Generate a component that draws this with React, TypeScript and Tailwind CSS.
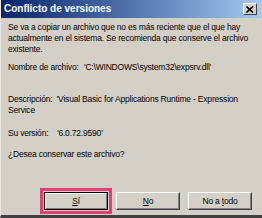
import React from 'react';

const font = { fontFamily: '"Liberation Sans", Arial, sans-serif' };

const ClassicButton = ({ label, accessKey, focused }: { label: string; accessKey: number; focused?: boolean }) => {
    const chars = label.split('');
    return (
        <div
            className={`h-[18px] w-[64px] bg-[#d4d0c8] flex items-center justify-center text-[8.5px] text-black border ${
                focused
                    ? 'border-black'
                    : 'border-t-white border-l-white border-b-[#404040] border-r-[#404040]'
            }`}
        >
            <div
                className={`w-full h-full flex items-center justify-center ${
                    focused
                        ? 'border border-t-white border-l-white border-b-[#808080] border-r-[#808080]'
                        : 'border border-transparent border-b-[#808080] border-r-[#808080]'
                }`}
            >
                <span>
                    {chars.map((c, i) => (
                        <span key={i} className={i === accessKey ? 'underline' : ''}>
                            {c}
                        </span>
                    ))}
                </span>
            </div>
        </div>
    );
};

export default function App() {
    return (
        <div
            className="w-[262px] h-[218px] bg-[#d4d0c8] flex flex-col border-l border-l-[#e8e6e0] border-b-[3px] border-b-[#404040] overflow-hidden"
            style={font}
        >
            {/* Title bar */}
            <div className="h-[18px] flex items-center justify-between pl-[3px] pr-[5px] bg-gradient-to-r from-[#0a246a] to-[#a6caf0]">
                <span className="text-white font-bold text-[10px] leading-none">Conflicto de versiones</span>
                <div className="w-[14px] h-[12px] bg-[#d4d0c8] border border-t-white border-l-white border-b-[#404040] border-r-[#404040] flex items-center justify-center">
                    <svg width="8" height="7" viewBox="0 0 8 7">
                        <path d="M0.5 0.5 L7 6.5 M7 0.5 L0.5 6.5" stroke="#000" strokeWidth="1.6" />
                    </svg>
                </div>
            </div>

            {/* Body */}
            <div className="flex-1 flex flex-col px-[7px] pt-[4px] text-[8.5px] tracking-[-0.2px] leading-[11px] text-black">
                <p>
                    Se va a copiar un archivo que no es más reciente que el que hay actualmente en el sistema. Se recomienda que conserve el archivo existente.
                </p>
                <div className="mt-[7px] flex">
                    <span className="w-[76px] shrink-0">Nombre de archivo:</span>
                    <span>'C:\WINDOWS\system32\expsrv.dll'</span>
                </div>
                <p className="mt-[21px]">
                    Descripción:&nbsp; 'Visual Basic for Applications Runtime - Expression Service
                </p>
                <div className="mt-[12px] flex">
                    <span className="w-[49px] shrink-0">Su versión:</span>
                    <span>'6.0.72.9590'</span>
                </div>
                <p className="mt-[10px]">¿Desea conservar este archivo?</p>

                <div className="mt-auto mb-[5px] flex justify-end gap-[8px] pr-[3px]">
                    <div className="border-[3px] border-[#e33f74] p-[1px] -mr-[4px] -my-[4px]">
                        <ClassicButton label="Sí" accessKey={0} focused />
                    </div>
                    <ClassicButton label="No" accessKey={0} />
                    <ClassicButton label="No a todo" accessKey={5} />
                </div>
            </div>
        </div>
    );
}
